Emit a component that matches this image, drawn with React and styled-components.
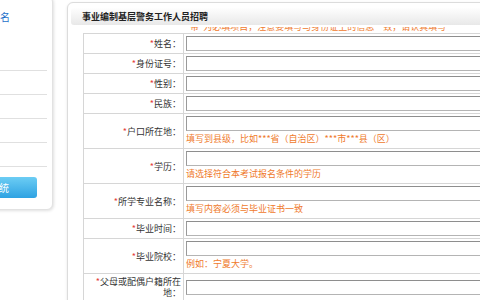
import styled, { createGlobalStyle } from "styled-components";

const GlobalStyle = createGlobalStyle`
  * { box-sizing: border-box; }
  html, body { margin: 0; padding: 0; background: #fff; overflow: hidden; }
  body {
    width: 480px;
    height: 300px;
    font-family: "Noto Sans CJK SC", "Liberation Sans", sans-serif;
    color: #333;
  }
`;

const rows = [
  { label: "姓名" },
  { label: "身份证号" },
  { label: "性别" },
  { label: "民族" },
  { label: "户口所在地", hint: "填写到县级，比如***省（自治区）***市***县（区）" },
  { label: "学历", hint: "请选择符合本考试报名条件的学历" },
  { label: "所学专业名称", hint: "填写内容必须与毕业证书一致" },
  { label: "毕业时间" },
  { label: "毕业院校", hint: "例如：宁夏大学。" },
  { label: "父母或配偶户籍所在地" },
];

const menu = ["报名须知", "考生注册", "报名信息", "打印准考证", "成绩查询"];

export default function App() {
  return (
    <>
      <GlobalStyle />
      <Page>
        <SidePanel>
          <SideTitle>考生报名</SideTitle>
          <Menu>
            {menu.map((m) => (
              <MenuItem key={m}>{m}</MenuItem>
            ))}
          </Menu>
          <ButtonRow>
            <LoginButton>登录系统</LoginButton>
          </ButtonRow>
        </SidePanel>

        <MainPanel>
          <TitleBar>事业编制基层警务工作人员招聘</TitleBar>
          <Content>
            <Notice>带*为必填项目，注意要填写与身份证上的信息一致，请认真填写</Notice>
            <Form>
              {rows.map((r) => (
                <Row key={r.label}>
                  <Label>
                    <span>
                      <Star>*</Star>
                      {r.label}：
                    </span>
                  </Label>
                  <Field>
                    <TextInput type="text" defaultValue="" />
                    {r.hint && <Hint>{r.hint}</Hint>}
                  </Field>
                </Row>
              ))}
            </Form>
          </Content>
        </MainPanel>
      </Page>
    </>
  );
}

const Page = styled.div`
  display: flex;
  align-items: flex-start;
  width: 480px;
  height: 300px;
  overflow: hidden;
`;

const SidePanel = styled.div`
  flex: none;
  width: 130px;
  height: 214px;
  margin-left: -77px;
  margin-top: -4px;
  background: #fff;
  border: 1px solid #e2e2e2;
  border-radius: 6px;
  box-shadow: 1px 1px 3px rgba(0, 0, 0, 0.12);
`;

const SideTitle = styled.div`
  padding: 14px 0 0 46px;
  font-size: 10px;
  line-height: 12px;
  color: #1d6fc9;
  white-space: nowrap;
`;

const Menu = styled.ul`
  list-style: none;
  margin: 24px 5px 0 4px;
  padding: 0;
`;

const MenuItem = styled.li`
  height: 24px;
  line-height: 23px;
  font-size: 9px;
  color: #555;
  border-bottom: 1px solid #e0e0e0;
  white-space: nowrap;
  overflow: hidden;
  text-overflow: clip;
  padding-right: 80px;
`;

const ButtonRow = styled.div`
  display: flex;
  justify-content: flex-end;
  margin-top: 10px;
  padding-right: 15px;
`;

const LoginButton = styled.button`
  width: 96px;
  height: 21px;
  padding: 0;
  border: none;
  border-radius: 3px;
  background: linear-gradient(#6ccdf4, #2ea2e2);
  color: #fff;
  font-family: inherit;
  font-size: 10px;
  line-height: 21px;
  text-align: center;
  white-space: nowrap;
`;

const MainPanel = styled.div`
  flex: none;
  width: 560px;
  height: 330px;
  margin-left: 14px;
  margin-top: 2px;
  padding: 5px 3px 0;
  background: #fff;
  border: 1px solid #dcdcdc;
  border-radius: 6px;
  box-shadow: 0 1px 3px rgba(0, 0, 0, 0.1);
  display: flex;
  flex-direction: column;
`;

const TitleBar = styled.div`
  flex: none;
  height: 17px;
  padding-left: 11px;
  background: linear-gradient(#fefefe, #e8e8e8);
  border-radius: 3px;
  font-size: 9px;
  font-weight: bold;
  line-height: 17px;
  color: #222;
  white-space: nowrap;
`;

const Content = styled.div`
  flex: 1;
  margin-top: 2px;
  overflow: hidden;
`;

const Notice = styled.div`
  height: 20px;
  margin-top: -14px;
  padding: 8px 0 0 119px;
  font-size: 9px;
  line-height: 12px;
  color: #ef7a2c;
  white-space: nowrap;
`;

const Form = styled.div`
  margin-left: 12px;
  border-top: 1px solid #d6d6d6;
  border-left: 1px solid #d6d6d6;
`;

const Row = styled.div`
  display: grid;
  grid-template-columns: 100px 1fr;
  border-bottom: 1px solid #d6d6d6;
`;

const Label = styled.div`
  display: flex;
  align-items: center;
  justify-content: flex-end;
  padding: 2px 2px 2px 4px;
  border-right: 1px solid #d6d6d6;
  font-size: 9px;
  line-height: 11px;
  text-align: right;
  color: #333;
`;

const Star = styled.span`
  color: #e53a3a;
`;

const Field = styled.div`
  display: flex;
  flex-direction: column;
  justify-content: center;
  padding: 2px;
`;

const TextInput = styled.input`
  width: 380px;
  height: 15px;
  margin: 0;
  padding: 0 2px;
  border: 1px solid #b4b4b4;
  border-top-color: #8e8e8e;
  border-left-color: #9a9a9a;
  background: #fff;
  font-size: 9px;
  outline: none;
`;

const Hint = styled.div`
  font-size: 9px;
  line-height: 15px;
  color: #ef7a2c;
  white-space: nowrap;
`;
